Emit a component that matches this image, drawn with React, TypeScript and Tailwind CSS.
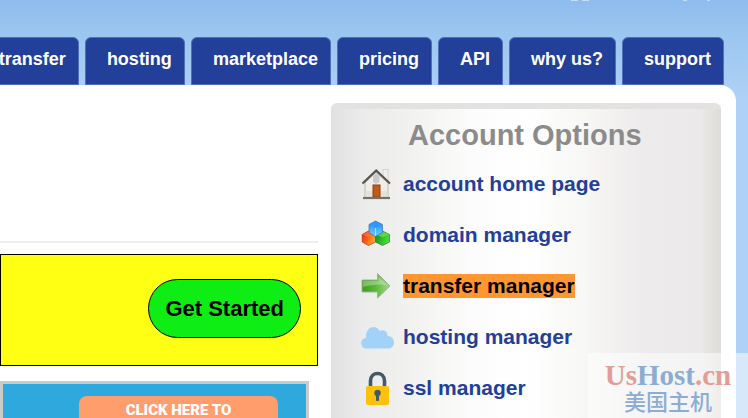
// App.tsx
const tabs = ['transfer', 'hosting', 'marketplace', 'pricing', 'API', 'why us?', 'support'];

function HomeIcon() {
    return (
        <svg viewBox="0 0 32 32" className="h-8 w-8" aria-hidden="true">
            <rect x="22" y="1.5" width="5" height="13" fill="#f1efed" stroke="#cfcdc9" strokeWidth="0.8" />
            <path d="M4 15 L15 4 L27 15 V29.5 H4 Z" fill="#eeeee6" stroke="#aaa9a2" strokeWidth="0.8" />
            <path d="M4 23 H27 V29 H4 Z" fill="#dedfd2" opacity="0.7" />
            <path d="M12 8 L15 5 L18.5 8 V14 L15 16 L12 14 Z" fill="#c9cacf" />
            <path d="M1.5 15.5 L15.2 2.5 L29 15.5" fill="none" stroke="#5a5451" strokeWidth="2.2" />
            <rect x="12" y="17" width="7" height="12" fill="#c25a1c" stroke="#8a3c12" strokeWidth="1" />
            <path d="M2 30 H29" stroke="#77716b" strokeWidth="2.2" />
        </svg>
    );
}

function DomainIcon() {
    return (
        <svg viewBox="0 0 32 32" className="h-8 w-8" aria-hidden="true">
            <defs>
                <linearGradient id="redCube" x1="0" y1="0" x2="1" y2="0.6">
                    <stop offset="0" stopColor="#f2200a" />
                    <stop offset="0.5" stopColor="#fb5a14" />
                    <stop offset="1" stopColor="#ffb030" />
                </linearGradient>
                <linearGradient id="greenCube" x1="0" y1="0" x2="1" y2="0.4">
                    <stop offset="0" stopColor="#0a8a10" />
                    <stop offset="1" stopColor="#4bdd38" />
                </linearGradient>
                <linearGradient id="blueCube" x1="0" y1="0" x2="0" y2="1">
                    <stop offset="0" stopColor="#2088f2" />
                    <stop offset="1" stopColor="#6bd2ff" />
                </linearGradient>
            </defs>
            <path d="M7.5 12 L14.5 15.5 V23 L7.5 26.5 L1.2 23 V15.5 Z" fill="url(#redCube)" stroke="#a8370f" strokeWidth="0.7" />
            <path d="M1.5 15.5 L7.5 12.5 L14 15.5 L7.5 18.5 Z" fill="#ff7a48" opacity="0.6" />
            <path d="M21.5 12 L28.5 15.5 V23 L21.5 26.5 L14.5 23 V15.5 Z" fill="url(#greenCube)" stroke="#2b7a28" strokeWidth="0.7" />
            <path d="M15 15.5 L21.5 12.5 L28 15.5 L21.5 18.5 Z" fill="#7be860" opacity="0.6" />
            <path d="M14.5 2 L21.5 5.5 V13.5 L14.5 17.5 L8 13.5 V5.5 Z" fill="url(#blueCube)" stroke="#3672b4" strokeWidth="0.7" />
            <path d="M8 5.5 L14.5 2.5 L21 5.5 L14.5 8.5 Z" fill="#2f97ff" />
            <path d="M14.5 9 V17" stroke="#b5e8ff" strokeWidth="0.8" />
        </svg>
    );
}

function TransferIcon() {
    return (
        <svg viewBox="0 0 32 32" className="h-8 w-8" aria-hidden="true">
            <defs>
                <linearGradient id="arrow" x1="0" y1="0" x2="1" y2="0">
                    <stop offset="0" stopColor="#3c9a1e" />
                    <stop offset="0.5" stopColor="#5fb83c" />
                    <stop offset="1" stopColor="#a4dc8a" />
                </linearGradient>
            </defs>
            <path d="M1 10 H16.5 V3.5 L29 16 L16.5 28 V22 H1 Z" fill="url(#arrow)" stroke="#9db292" />
            <path d="M2 11 H17.5 V6.5 L26 15 C18 13.5 10 15 2 17 Z" fill="#ffffff" opacity="0.3" />
        </svg>
    );
}

function HostingIcon() {
    return (
        <svg viewBox="0 0 34 32" className="h-8 w-[34px]" aria-hidden="true">
            <path
                d="M6 27.5 C-1.5 27.5 -1.5 17.5 5 17 C4 5.5 15.5 3 18.5 10 C22 8 27 10.5 26.5 15 C35 15 35 27.5 27.5 27.5 Z"
                fill="#a2d2f7"
            />
        </svg>
    );
}

function LockIcon() {
    return (
        <svg viewBox="0 0 32 36" className="h-9 w-8" aria-hidden="true">
            <path d="M9.5 18 V11 C9.5 1 23.5 1 23.5 11 V18" fill="none" stroke="#455a64" strokeWidth="3.6" />
            <rect x="5" y="16" width="23" height="19" rx="2" fill="#ffc107" />
            <circle cx="16.5" cy="23" r="3.2" fill="#455a64" />
            <rect x="15" y="23" width="3" height="8" rx="1" fill="#455a64" />
        </svg>
    );
}

const options = [
    { label: 'account home page', icon: <HomeIcon /> },
    { label: 'domain manager', icon: <DomainIcon /> },
    { label: 'transfer manager', icon: <TransferIcon />, active: true },
    { label: 'hosting manager', icon: <HostingIcon /> },
    { label: 'ssl manager', icon: <LockIcon /> },
];

function AccountOptions() {
    return (
        <aside className="w-[390px] shrink-0 rounded-t-md border-t-[6px] border-[#e3e2e0] bg-[linear-gradient(to_right,#e1e1e1_0%,#ebebeb_8%,#f1f1ef_20%,#fcfcfc_36%,#ffffff_50%,#f7f7f5_65%,#edebeb_80%,#ebe9e9_95%,#dedcd8_100%)]">
            <h2 className="mt-2 mb-[5px] ml-[77px] text-[29px] leading-9 font-bold text-[#8b8b8b]">Account Options</h2>
            <ul>
                {options.map((option) => (
                    <li key={option.label} className="flex h-[51px] items-center pl-[30px]">
                        <span className="flex w-[42px] shrink-0">{option.icon}</span>
                        <a
                            href="#"
                            className={
                                option.active
                                    ? 'bg-[#ff9632] text-[21px] leading-6 font-bold text-black'
                                    : 'text-[21px] leading-6 font-bold text-[#223f99]'
                            }
                        >
                            {option.label}
                        </a>
                    </li>
                ))}
            </ul>
        </aside>
    );
}

export default function App() {
    return (
        <div className="relative flex h-screen flex-col overflow-hidden bg-[linear-gradient(to_bottom,#8fbcee_0px,#9bc6ef_35px,#afd1f6_100px,#afd1f6_100%)] font-['Liberation_Sans',Arial,sans-serif]">
            <header className="shrink-0 overflow-hidden">
                <div className="flex h-[37px] justify-end pr-[38px]">
                    <span className="mr-1 h-px w-[7px] bg-white/50" />
                    <span className="mr-[94px] h-px w-[7px] bg-white/50" />
                    <span className="mr-5 h-px w-1 bg-white/50" />
                    <span className="h-px w-[3px] bg-white/50" />
                </div>
                <nav className="flex justify-end gap-1.5 pr-6">
                    {tabs.map((tab) => (
                        <a
                            key={tab}
                            href="#"
                            className="h-12 shrink-0 rounded-t-md border border-[#4f6fb8] bg-[#223f99] pt-[7px] pr-3 pl-[21px] text-lg font-bold text-white"
                        >
                            {tab}
                        </a>
                    ))}
                </nav>
            </header>

            <main className="mr-3 flex flex-1 gap-[13px] rounded-tr-2xl bg-white pt-[18px] pr-[15px]">
                <div className="flex min-w-0 flex-1 flex-col">
                    <hr className="mt-[138px] border-t-2 border-[#ededed]" />
                    <section className="mt-[11px] flex h-28 shrink-0 items-center justify-end border border-black bg-[#ffff14] pr-4 pb-[3px]">
                        <button className="h-[59px] rounded-full border border-black bg-[#0fee14] px-4 text-[22px] font-bold text-black">
                            Get Started
                        </button>
                    </section>
                    <section className="mt-[15px] mr-[9px] flex h-24 shrink-0 items-start justify-end border-[3px] border-[#cacaca] bg-[#2fa9dd] pt-3 pr-7">
                        <button className="flex h-16 w-[199px] justify-center rounded-lg bg-[#ff9d6c] pt-1.5 font-['Roboto','Liberation_Sans',sans-serif] text-[15px] leading-4 font-black text-white">
                            CLICK HERE TO
                        </button>
                    </section>
                </div>
                <AccountOptions />
            </main>

            <div className="absolute right-0 bottom-0 h-[65px] w-40 bg-white/50 pt-1.5 text-center">
                <p className="font-['Liberation_Serif',serif] text-[29px] leading-8 font-bold text-[#8cacd4]">
                    <span className="text-[#e49d96]">Us</span>Host<span className="text-[#e49d96]">.cn</span>
                </p>
                <p className="font-['Liberation_Sans','Noto_Sans_CJK_SC',sans-serif] text-[22px] leading-6 font-medium text-[#8cacd4]">
                    美国主机
                </p>
            </div>
        </div>
    );
}
